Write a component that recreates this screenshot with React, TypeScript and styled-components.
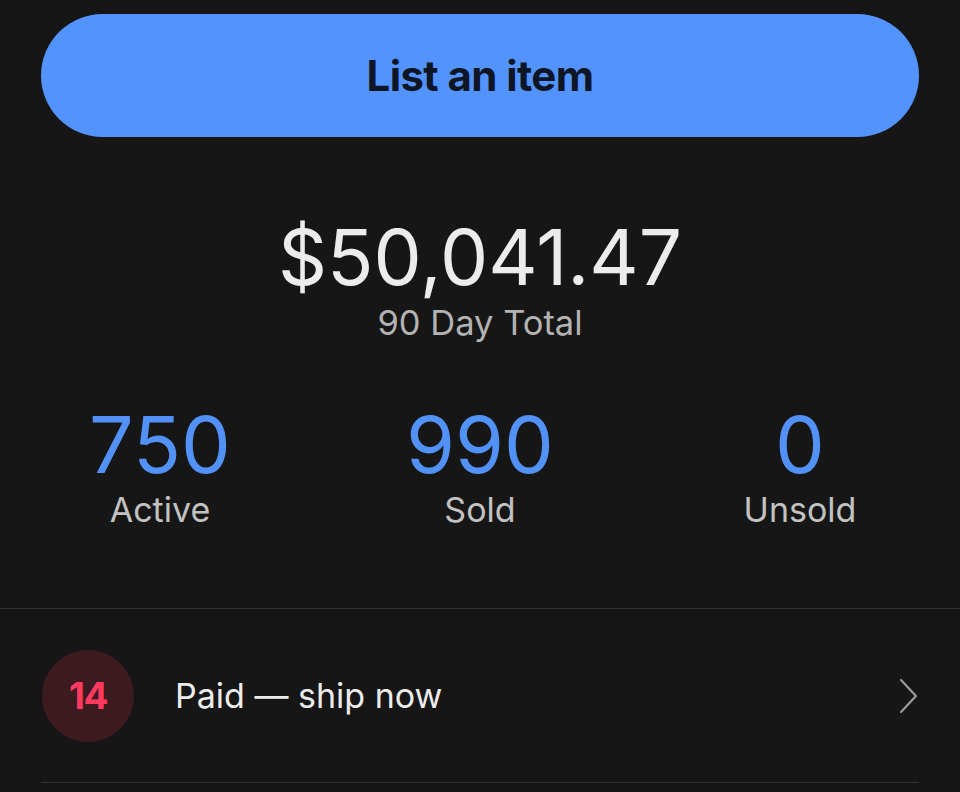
import React from "react";
import styled, { createGlobalStyle } from "styled-components";

const Global = createGlobalStyle`
  html, body { margin: 0; padding: 0; background: #161616; }
  body { font-family: Inter, "Noto Sans", sans-serif; -webkit-font-smoothing: antialiased; }
`;

const Page = styled.div`
  width: 960px;
  height: 792px;
  background: #161616;
  overflow: hidden;
  display: flex;
  flex-direction: column;
`;

const ButtonWrap = styled.div`
  padding: 14px 41px 0 41px;
`;

const PrimaryButton = styled.button`
  width: 100%;
  height: 123px;
  border: none;
  border-radius: 62px;
  background: #5393fe;
  color: #0e1626;
  font-family: Inter, sans-serif;
  font-weight: 700;
  font-size: 42px;
  letter-spacing: -0.6px;
  display: flex;
  align-items: center;
  justify-content: center;
  padding: 0;
`;

const Summary = styled.div`
  display: flex;
  flex-direction: column;
  align-items: center;
  margin-top: 81px;
`;

const Total = styled.div`
  font-size: 76.5px;
  line-height: 78px;
  color: #ececec;
  font-weight: 400;
`;

const TotalLabel = styled.div`
  font-size: 34.5px;
  line-height: 40px;
  color: #b3b3b3;
  margin-top: 7px;
`;

const Stats = styled.div`
  display: grid;
  grid-template-columns: repeat(3, 1fr);
  margin-top: 59px;
`;

const Stat = styled.div`
  display: flex;
  flex-direction: column;
  align-items: center;
`;

const StatValue = styled.div`
  font-size: 79px;
  line-height: 84px;
  color: #5291f5;
`;

const StatLabel = styled.div`
  font-size: 34px;
  line-height: 40px;
  color: #c2c2c2;
  margin-top: 4px;
`;

const Divider = styled.div<{ $inset?: boolean }>`
  height: 1px;
  background: #333333;
  margin: 0 ${(p) => (p.$inset ? "41px" : "0")};
`;

const TopDivider = styled(Divider)`
  margin-top: 78px;
`;

const Row = styled.div`
  display: flex;
  align-items: center;
  height: 173px;
  padding: 0 41px 0 42px;
`;

const Badge = styled.div`
  width: 92px;
  height: 92px;
  border-radius: 50%;
  background: #3c1a20;
  color: #ff3a5e;
  font-weight: 700;
  font-size: 37px;
  display: flex;
  align-items: center;
  justify-content: center;
  letter-spacing: -1.5px;
`;

const RowText = styled.div`
  flex: 1;
  margin-left: 41px;
  font-size: 34px;
  color: #ececec;
`;

const Chevron = styled.svg`
  width: 20px;
  height: 36px;
`;

export default function App() {
  return (
    <Page>
      <Global />
      <ButtonWrap>
        <PrimaryButton>List an item</PrimaryButton>
      </ButtonWrap>
      <Summary>
        <Total>$50,041.47</Total>
        <TotalLabel>90 Day Total</TotalLabel>
      </Summary>
      <Stats>
        <Stat>
          <StatValue>750</StatValue>
          <StatLabel>Active</StatLabel>
        </Stat>
        <Stat>
          <StatValue>990</StatValue>
          <StatLabel>Sold</StatLabel>
        </Stat>
        <Stat>
          <StatValue>0</StatValue>
          <StatLabel>Unsold</StatLabel>
        </Stat>
      </Stats>
      <TopDivider />
      <Row>
        <Badge>14</Badge>
        <RowText>Paid — ship now</RowText>
        <Chevron viewBox="0 0 20 36" fill="none">
          <path d="M2 2 L17 18 L2 34" stroke="#9a9a9a" strokeWidth="2.2" strokeLinecap="round" strokeLinejoin="round" />
        </Chevron>
      </Row>
      <Divider $inset />
    </Page>
  );
}
